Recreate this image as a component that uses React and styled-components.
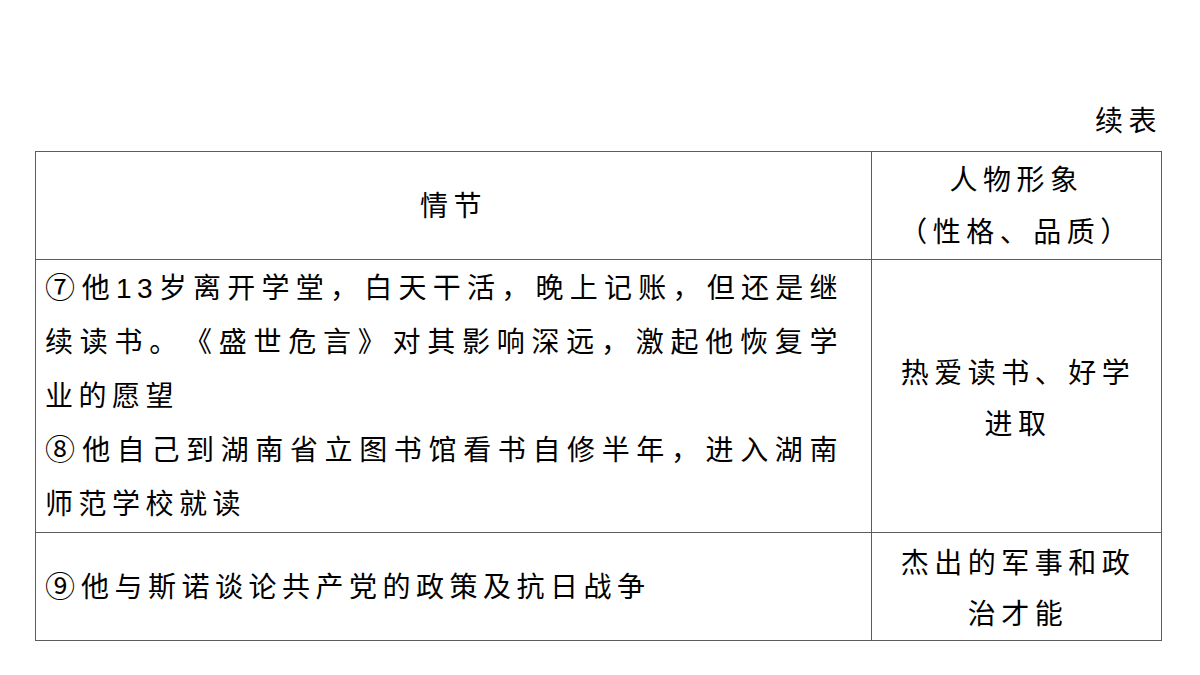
import React from 'react';
import styled, { createGlobalStyle } from 'styled-components';

const GlobalStyle = createGlobalStyle`
  html, body {
    margin: 0;
    padding: 0;
    background: #ffffff;
  }
  body {
    font-family: "Liberation Sans", "Noto Sans CJK SC", sans-serif;
    color: #000;
    text-spacing-trim: space-all;
  }
`;

const App = () => {
  return (
    <>
      <GlobalStyle />
      <Page>
        <Caption>续表</Caption>
        <Table>
          <colgroup>
            <col style={{ width: 836 }} />
            <col style={{ width: 290 }} />
          </colgroup>
          <tbody>
            <Row $height={108}>
              <HeadCell>情节</HeadCell>
              <HeadCell $narrow>
                人物形象
                <br />
                （性格、品质）
              </HeadCell>
            </Row>
            <Row $height={272}>
              <StoryCell>
                <Para>
                  <Marker>⑦</Marker>他13岁离开学堂，白天干活，晚上记账，但还是继续读书。《盛世危言》对其影响深远，激起他恢复学业的愿望
                </Para>
                <Para>
                  <Marker>⑧</Marker>他自己到湖南省立图书馆看书自修半年，进入湖南师范学校就读
                </Para>
              </StoryCell>
              <TraitCell>热爱读书、好学进取</TraitCell>
            </Row>
            <Row $height={107}>
              <StoryCell>
                <Para>
                  <Marker>⑨</Marker>他与斯诺谈论共产党的政策及抗日战争
                </Para>
              </StoryCell>
              <TraitCell>杰出的军事和政治才能</TraitCell>
            </Row>
          </tbody>
        </Table>
      </Page>
    </>
  );
};

const Page = styled.div`
  width: 1126px;
  margin-left: 35px;
  padding-top: 102px;
`;

const Caption = styled.div`
  text-align: right;
  font-size: 28px;
  line-height: 40px;
  letter-spacing: 5.5px;
  margin-right: -1px;
  margin-bottom: 9px;
`;

const Table = styled.table`
  width: 1126px;
  border-collapse: collapse;
  table-layout: fixed;
  font-size: 28px;
  letter-spacing: 5.5px;
  text-spacing-trim: space-all;
`;

const Row = styled.tr`
  height: ${(p) => p.$height}px;
`;

const Cell = styled.td`
  border: 1px solid #5c5c5c;
  vertical-align: middle;
  padding: 0;
`;

const HeadCell = styled(Cell)`
  text-align: center;
  line-height: 52px;
  padding: ${(p) => (p.$narrow ? '3px 14px 0' : '3px 0 0')};
`;

const StoryCell = styled(Cell)`
  padding: 2px 28px 0 9px;
  line-height: 54px;
`;

const Para = styled.p`
  margin: 0;
  text-align: justify;
`;

const Marker = styled.span`
  display: inline-block;
  width: 36px;
  font-family: "Noto Sans CJK SC", sans-serif;
  font-size: 30px;
  line-height: 1;
  letter-spacing: 0;
  text-align: left;
`;

const TraitCell = styled(Cell)`
  padding: 5px 14px 0 17px;
  text-align: center;
  line-height: 51px;
`;

export default App;
